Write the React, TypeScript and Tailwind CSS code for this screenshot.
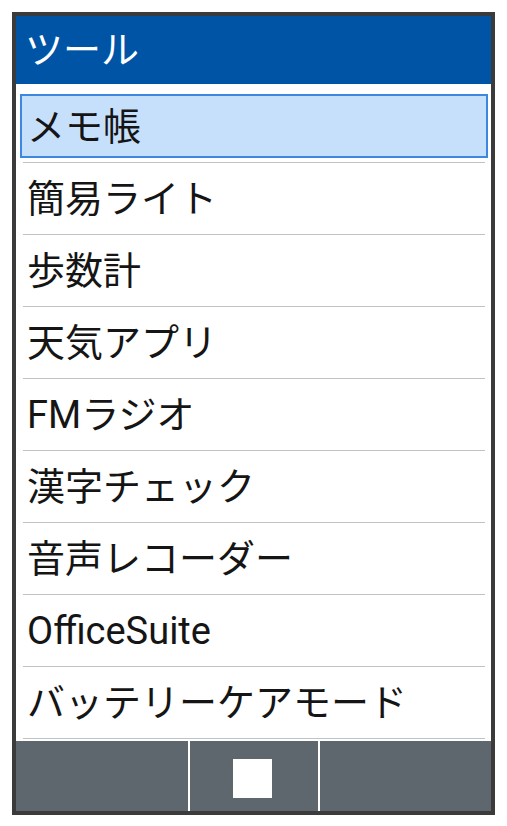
const items = [
  'メモ帳',
  '簡易ライト',
  '歩数計',
  '天気アプリ',
  'FMラジオ',
  '漢字チェック',
  '音声レコーダー',
  'OfficeSuite',
  'バッテリーケアモード',
]

export default function App() {
  return (
    <div
      className="w-[507px] h-[826px] bg-white p-3"
      style={{ fontFamily: "Roboto, 'Noto Sans CJK JP', sans-serif" }}
    >
      <div className="w-[483px] h-[803px] border-4 border-[#3b3b3b] flex flex-col bg-white">
        {/* Title bar */}
        <div className="h-[68px] bg-[#0054a6] flex items-center pl-[9px] text-white text-[38px] leading-none">
          ツール
        </div>

        {/* Menu list */}
        <div className="flex-1 pt-[7px]">
          {items.map((label, i) => (
            <div key={label}>
              <div className="relative h-[71px] flex items-center pl-[11px] text-[38px] leading-none text-[#151515]">
                {i === 0 && (
                  <div className="absolute top-[3px] bottom-[4px] left-[4px] right-[3px] border-2 border-[#3d87e0] bg-[#c6e0fc]" />
                )}
                <span className="relative">{label}</span>
              </div>
              <div className="h-px ml-[7px] mr-[6px] bg-[#bfc3c6]" />
            </div>
          ))}
        </div>

        {/* Soft key bar */}
        <div className="h-[70px] flex bg-[#5f676e]">
          <div className="w-[172px]" />
          <div className="w-[2px] bg-white" />
          <div className="w-[128px] flex justify-center pt-[18px] pr-[3px]">
            <div className="w-[39px] h-[39px] bg-white" />
          </div>
          <div className="w-[2px] bg-white" />
          <div className="flex-1" />
        </div>
      </div>
    </div>
  )
}
